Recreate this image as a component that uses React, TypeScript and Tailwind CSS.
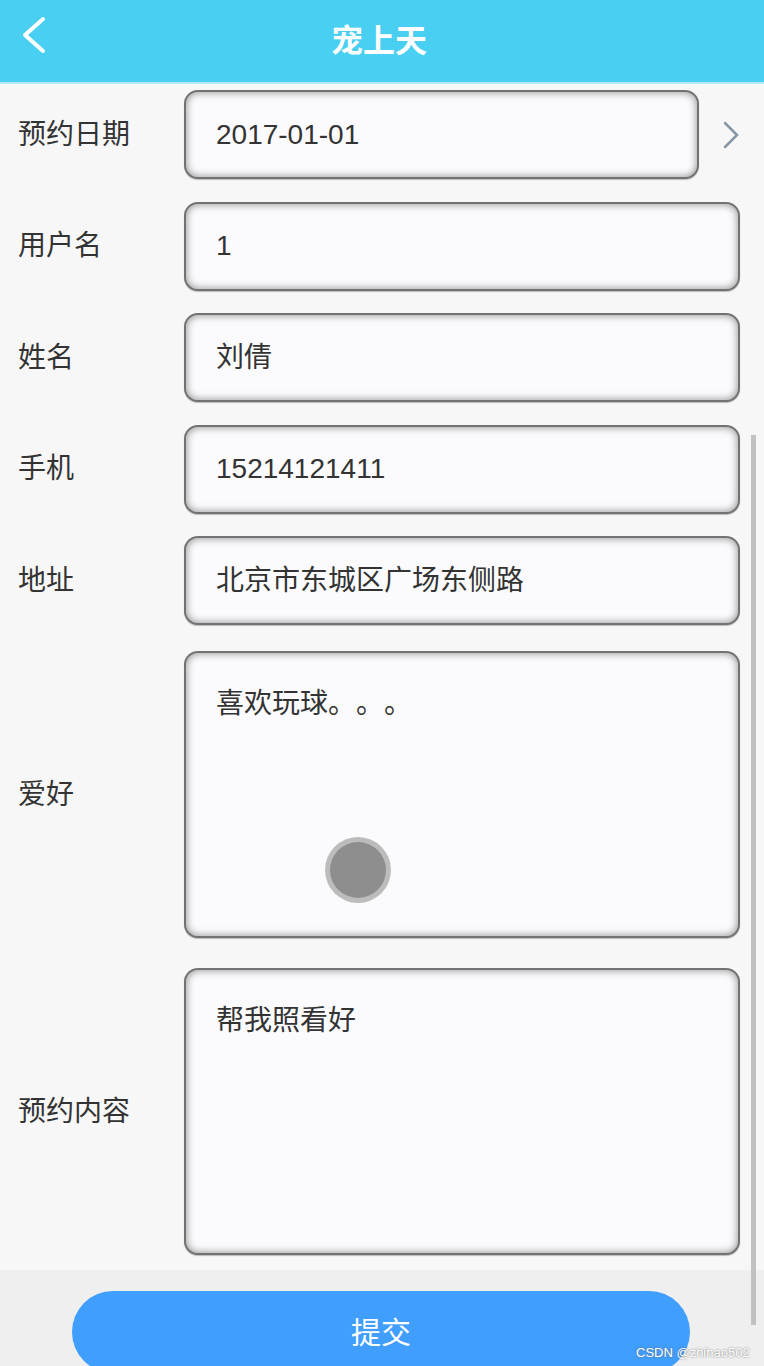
const cn = '"Liberation Sans", "Noto Sans CJK SC", sans-serif';

const fields = [
  { label: "用户名", value: "1" },
  { label: "姓名", value: "刘倩" },
  { label: "手机", value: "15214121411" },
  { label: "地址", value: "北京市东城区广场东侧路" },
];

const boxClass =
  "rounded-[14px] border-2 border-[#727272] bg-[#fbfbfd] shadow-[inset_0_0_9px_rgba(0,0,0,0.45),0_1px_1px_rgba(0,0,0,0.25)]";

function Row({ label, value }: { label: string; value: string }) {
  return (
    <div className="flex h-[89px] items-center">
      <div className="w-[184px] pl-[18px] text-[28px] text-[#333]">{label}</div>
      <div className={`${boxClass} mr-[24px] flex h-full flex-1 items-center pl-[30px] text-[28px] text-[#333]`}>
        {value}
      </div>
    </div>
  );
}

function AreaRow({ label, value }: { label: string; value: string }) {
  return (
    <div className="flex h-[287px] items-center">
      <div className="w-[184px] pl-[18px] text-[28px] text-[#333]">{label}</div>
      <div
        className={`${boxClass} mr-[24px] h-full flex-1 pl-[30px] pt-[30px] text-[28px] leading-[42px] text-[#333] [text-spacing-trim:space-all]`}
      >
        {value}
      </div>
    </div>
  );
}

export default function App() {
  return (
    <div className="relative flex h-[1366px] w-[764px] flex-col overflow-hidden bg-[#f7f7f7]" style={{ fontFamily: cn }}>
      <header className="relative flex h-[84px] shrink-0 items-center justify-center border-b-2 border-[#b5ebf8] bg-[#49cff1]">
        <svg className="absolute left-[18px] top-[16px]" width="32" height="40" viewBox="0 0 32 40">
          <polyline points="25,3 7,19 25,35" fill="none" stroke="#fff" strokeWidth="4" strokeLinecap="round" strokeLinejoin="round" />
        </svg>
        <h1 className="mr-[6px] text-[32px] font-bold text-white">宠上天</h1>
      </header>

      <div className="flex flex-1 flex-col pt-[6px]">
        <div className="flex flex-col gap-[22.5px]">
          <div className="flex h-[89px] items-center">
            <div className="w-[184px] pl-[18px] text-[28px] text-[#333]">预约日期</div>
            <div className={`${boxClass} flex h-full w-[515px] items-center pl-[30px] text-[28px] text-[#333]`}>
              2017-01-01
            </div>
            <svg className="ml-[22px]" width="20" height="30" viewBox="0 0 20 30">
              <polyline points="4,3 16,15 4,27" fill="none" stroke="#8796a4" strokeWidth="2.5" strokeLinecap="round" />
            </svg>
          </div>
          {fields.map((f) => (
            <Row key={f.label} label={f.label} value={f.value} />
          ))}
        </div>
        <div className="mt-[26px]">
          <AreaRow label="爱好" value="喜欢玩球。。。" />
        </div>
        <div className="mt-[30px]">
          <AreaRow label="预约内容" value="帮我照看好" />
        </div>
      </div>

      <div className="h-[96px] shrink-0 bg-[#f0efef] pl-[72px] pt-[21px]">
        <button className="flex h-[82px] w-[618px] items-center justify-center rounded-full bg-[#409efe] text-[30px] text-white">
          提交
        </button>
      </div>

      {/* overlays */}
      <div className="absolute left-[751px] top-[435px] h-[890px] w-[5px] bg-[#c1c1c1]" />
      <div className="absolute left-[325px] top-[837px] flex h-[66px] w-[66px] items-center justify-center rounded-full bg-[#bcbcbc]">
        <div className="h-[56px] w-[56px] rounded-full bg-[#8e8e8e]" />
      </div>
      <div className="absolute left-[636px] top-[1343px] text-[13px] text-white [text-shadow:0_0_2px_#666]">
        CSDN @zhihao502
      </div>
    </div>
  );
}
